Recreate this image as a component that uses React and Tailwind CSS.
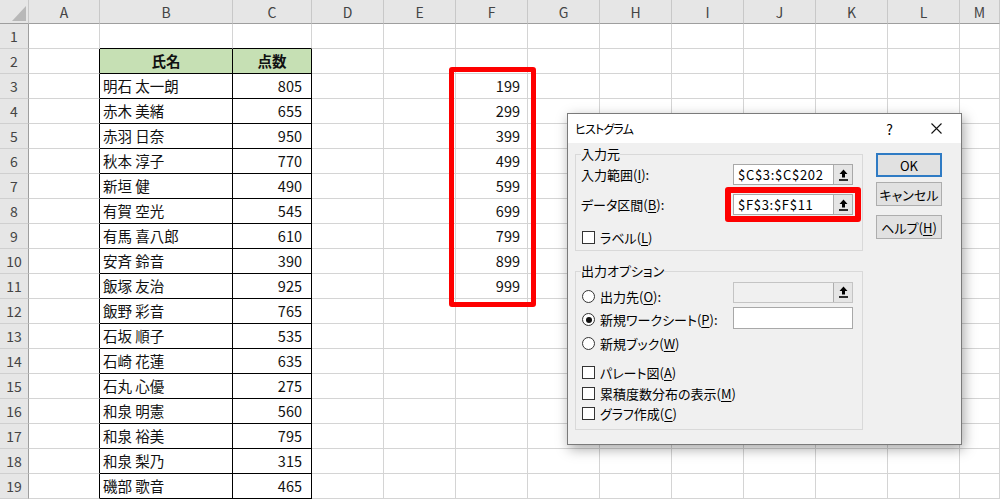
import React from 'react';

// Column layout of the sheet (widths in px, taken from the screenshot)
const columns = [
  { id: 'A', w: 'w-[71px]' },
  { id: 'B', w: 'w-[133px]' },
  { id: 'C', w: 'w-[79px]' },
  { id: 'D', w: 'w-[72px]' },
  { id: 'E', w: 'w-[72px]' },
  { id: 'F', w: 'w-[72px]' },
  { id: 'G', w: 'w-[72px]' },
  { id: 'H', w: 'w-[72px]' },
  { id: 'I', w: 'w-[72px]' },
  { id: 'J', w: 'w-[72px]' },
  { id: 'K', w: 'w-[72px]' },
  { id: 'L', w: 'w-[72px]' },
  { id: 'M', w: 'w-[40px]' },
];

const students = [
  ['明石 太一朗', 805],
  ['赤木 美緒', 655],
  ['赤羽 日奈', 950],
  ['秋本 淳子', 770],
  ['新垣 健', 490],
  ['有賀 空光', 545],
  ['有馬 喜八郎', 610],
  ['安斉 鈴音', 390],
  ['飯塚 友治', 925],
  ['飯野 彩音', 765],
  ['石坂 順子', 535],
  ['石崎 花蓮', 635],
  ['石丸 心優', 275],
  ['和泉 明憲', 560],
  ['和泉 裕美', 795],
  ['和泉 梨乃', 315],
  ['磯部 歌音', 465],
];

const bins = [199, 299, 399, 499, 599, 699, 799, 899, 999];

const rows = Array.from({ length: 19 }, (_, i) => i + 1);

const cellClass = (r, id) => {
  const tableCol = id === 'B' || id === 'C';
  let cls = 'h-[25px] shrink-0 border-r border-b flex items-center overflow-hidden whitespace-nowrap ';
  if (tableCol && r >= 2) cls += 'border-black ';
  else if (tableCol && r === 1) cls += 'border-r-[#d4d4d4] border-b-black ';
  else if (id === 'A' && r >= 2) cls += 'border-r-black border-b-[#d4d4d4] ';
  else cls += 'border-[#d4d4d4] ';
  if (tableCol && r === 2) cls += 'bg-[#c6e0b4] justify-center font-bold ';
  else if (id === 'B') cls += 'pl-[3px] ';
  else if (id === 'C') cls += 'justify-end pr-[9px] ';
  else if (id === 'F') cls += 'justify-end pr-[7px] ';
  return cls;
};

const cellText = (r, id) => {
  if (r === 2 && id === 'B') return '氏名';
  if (r === 2 && id === 'C') return '点数';
  if (r >= 3 && id === 'B') return students[r - 3][0];
  if (r >= 3 && id === 'C') return students[r - 3][1];
  if (r >= 3 && r <= 11 && id === 'F') return bins[r - 3];
  return null;
};

const RefButton = () => (
  <div className="w-[19px] h-full shrink-0 bg-[#e5e5e5] border-l border-[#adadad] flex items-center justify-center">
    <svg width="11" height="12" viewBox="0 0 11 12">
      <path d="M5.5 0.5 L9.5 5 H7 V8.5 H4 V5 H1.5 Z" fill="#000" />
      <rect x="1" y="10.2" width="9" height="1.6" fill="#000" />
    </svg>
  </div>
);

const RangeInput = ({ value, disabled }) => (
  <div className={`w-[120px] h-[21px] flex border ${disabled ? 'border-[#c4c4c4] bg-[#f0f0f0]' : 'border-[#a8a8a8] bg-white'}`}>
    <div className="flex-1 pl-[4px] flex items-center text-[13px] leading-none tracking-[0.7px]">{value}</div>
    <RefButton />
  </div>
);

const Checkbox = ({ children }) => (
  <div className="flex items-center gap-[5px]">
    <span className="w-[13px] h-[13px] border border-[#333] bg-white shrink-0" />
    <span>{children}</span>
  </div>
);

const Radio = ({ checked, children, className = '' }) => (
  <div className={`flex items-center gap-[5px] ${className}`}>
    <span className="w-[13px] h-[13px] rounded-full border border-[#333] bg-white shrink-0 flex items-center justify-center">
      {checked && <span className="w-[6px] h-[6px] rounded-full bg-[#111]" />}
    </span>
    <span>{children}</span>
  </div>
);

const U = ({ children }) => <span className="underline underline-offset-2">{children}</span>;

const HistogramDialog = () => (
  <div className="absolute left-[567px] top-[113px] w-[395px] h-[332px] border border-[#7a7a7a] bg-[#f0f0f0] shadow-[2px_4px_12px_rgba(0,0,0,0.35)] flex flex-col text-[13px] text-black leading-none [font-feature-settings:'palt']">
    {/* Title bar */}
    <div className="h-[29px] bg-white flex items-center pl-[7px]">
      <span className="text-[12px] tracking-[-0.8px]">ヒストグラム</span>
      <span className="ml-auto mr-[38px] text-[14px]">?</span>
      <svg className="mr-[19px]" width="11" height="11" viewBox="0 0 11 11">
        <path d="M0.5 0.5 L10.5 10.5 M10.5 0.5 L0.5 10.5" stroke="#111" strokeWidth="1.1" />
      </svg>
    </div>

    {/* Body */}
    <div className="flex items-start pl-[7px] gap-[13px]">
      <div className="w-[288px] flex flex-col">
        <fieldset className="mt-[3px] border border-[#d9d9d9] pl-[5px] pr-[9px] pb-[2px]">
          <legend className="leading-[16px]">入力元</legend>
          <div className="mt-[2px] h-[21px] flex items-center justify-between">
            <span>入力範囲(<U>I</U>):</span>
            <RangeInput value="$C$3:$C$202" />
          </div>
          <div className="mt-[9px] h-[21px] flex items-center justify-between">
            <span>データ区間(<U>B</U>):</span>
            <div className="relative">
              <RangeInput value="$F$3:$F$11" />
              <div className="absolute -left-[8px] -right-[8px] -top-[7px] -bottom-[7px] border-[6px] border-[#fe0000] rounded-[3px]" />
            </div>
          </div>
          <div className="mt-[12px] h-[21px] flex items-center pl-[1px]">
            <Checkbox>ラベル(<U>L</U>)</Checkbox>
          </div>
        </fieldset>

        <fieldset className="mt-[12px] border border-[#d9d9d9] pl-[5px] pr-[9px] pb-[6px]">
          <legend className="leading-[16px]">出力オプション</legend>
          <div className="mt-[2px] h-[22px] flex items-center justify-between">
            <Radio className="pt-[9px] pl-[1px]">出力先(<U>O</U>):</Radio>
            <RangeInput value="" disabled />
          </div>
          <div className="mt-[4px] h-[22px] flex items-center justify-between">
            <Radio checked className="pt-[3px] pl-[1px]">新規ワークシート(<U>P</U>):</Radio>
            <div className="w-[120px] h-[22px] border border-[#a8a8a8] bg-white" />
          </div>
          <div className="mt-[4px] h-[20px] flex items-center pl-[1px]">
            <Radio>新規ブック(<U>W</U>)</Radio>
          </div>
          <div className="mt-[9px] h-[20px] flex items-center pl-[1px]">
            <Checkbox>パレート図(<U>A</U>)</Checkbox>
          </div>
          <div className="mt-[1px] h-[20px] flex items-center pl-[1px]">
            <Checkbox>累積度数分布の表示(<U>M</U>)</Checkbox>
          </div>
          <div className="h-[20px] flex items-center pl-[1px]">
            <Checkbox>グラフ作成(<U>C</U>)</Checkbox>
          </div>
        </fieldset>
      </div>

      <div className="w-[66px] pt-[10px] flex flex-col">
        <button className="h-[24px] bg-[#e1e1e1] border-2 border-[#2f7bc4] flex items-center justify-center">OK</button>
        <button className="mt-[5px] h-[24px] bg-[#e1e1e1] border border-[#adadad] flex items-center justify-center">キャンセル</button>
        <button className="mt-[9px] h-[24px] bg-[#e1e1e1] border border-[#adadad] flex items-center justify-center">
          ヘルプ(<U>H</U>)
        </button>
      </div>
    </div>
  </div>
);

const App = () => {
  return (
    <div className="relative w-[1000px] h-[500px] overflow-hidden bg-white font-['Noto_Sans_CJK_JP','Noto_Sans',sans-serif] text-[14.5px] text-[#111] leading-none">
      {/* Column headers */}
      <div className="flex h-[24px]">
        <div className="w-[29px] h-[24px] shrink-0 bg-[#e6e6e6] border-r border-b border-r-[#c8c8c8] border-b-[#9e9e9e]">
          <svg width="28" height="23" viewBox="0 0 28 23">
            <path d="M26 6 L26 21 L12 21 Z" fill="#b8b8b8" />
          </svg>
        </div>
        {columns.map((c) => (
          <div
            key={c.id}
            className={`${c.w} h-[24px] shrink-0 bg-[#e6e6e6] border-r border-b border-r-[#c8c8c8] border-b-[#9e9e9e] flex items-center justify-center text-[14px] text-[#444]`}
          >
            {c.id}
          </div>
        ))}
      </div>

      {/* Rows */}
      {rows.map((r) => (
        <div key={r} className="flex h-[25px]">
          <div className="w-[29px] h-[25px] shrink-0 bg-[#e6e6e6] border-r border-b border-r-[#9e9e9e] border-b-[#cfcfcf] flex items-center justify-center text-[14px] text-[#444]">
            {r}
          </div>
          {columns.map((c) => (
            <div key={c.id} className={`${c.w} ${cellClass(r, c.id)}`}>
              {cellText(r, c.id)}
            </div>
          ))}
        </div>
      ))}

      {/* Highlight around the bin range */}
      <div className="absolute left-[449px] top-[67px] w-[87px] h-[240px] border-[5px] border-[#fe0000] rounded-[3px]" />

      <HistogramDialog />
    </div>
  );
};

export default App;
